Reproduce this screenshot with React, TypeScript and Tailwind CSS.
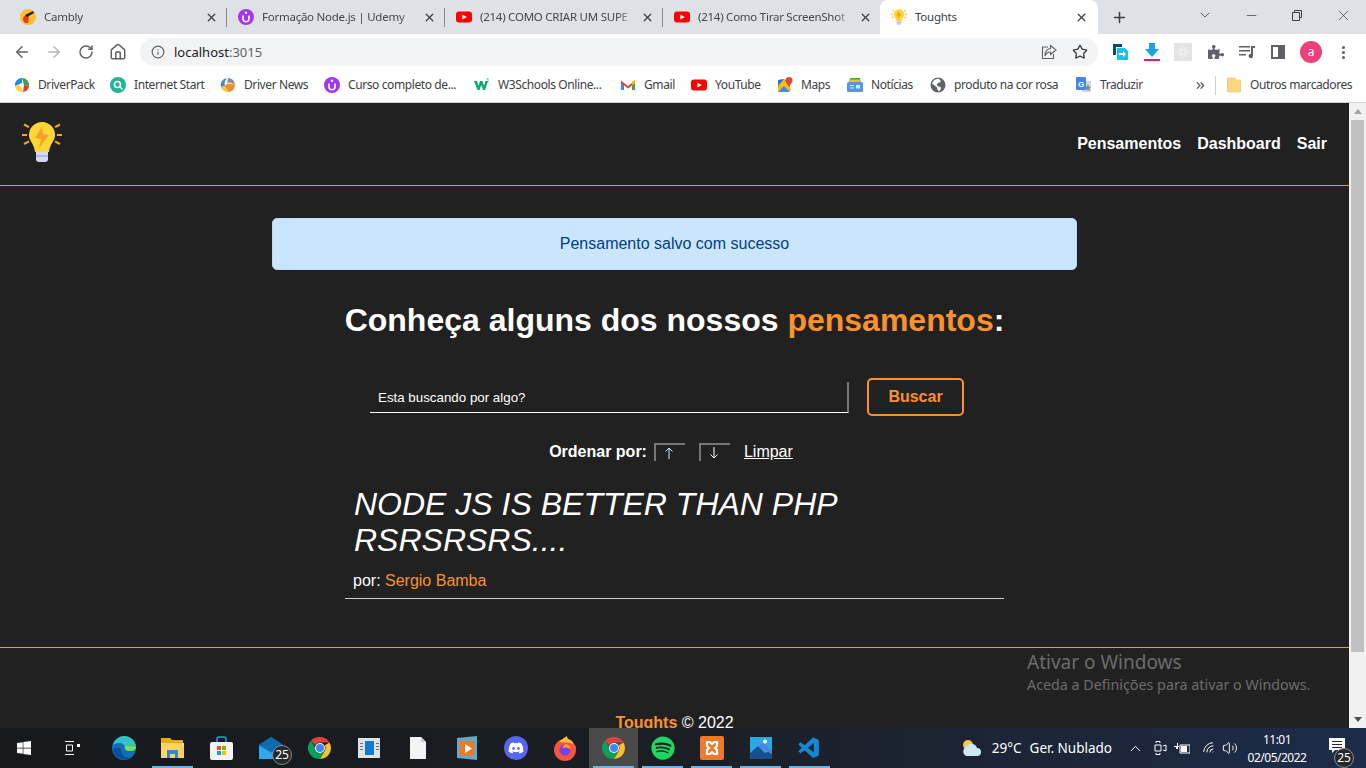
import React from 'react';
import { ArrowLeft, ArrowRight, RotateCw, Home, Info, Star, Plus, X, ChevronDown, Minus, MoreVertical, ChevronUp, Volume2, Wifi, ChevronsRight } from 'lucide-react';
import { FaPuzzlePiece, FaDiscord, FaSpotify, FaWindows } from 'react-icons/fa';
import { VscVscode } from 'react-icons/vsc';

const Bulb = ({ size }: { size: number }) => (
    <svg width={size} height={size} viewBox="0 0 40 40">
        <g stroke="#f9a02c" strokeWidth="2.2" strokeLinecap="square">
            <path d="M1 13h3M36 13h3M3 3l3 1.6M37 3l-3 1.6M3 21.5l3-1.6M37 21.5l-3-1.6" />
        </g>
        <path d="M20 0a13 13 0 0 1 13 13c0 6-5 8-6 17H13c-1-9-6-11-6-17A13 13 0 0 1 20 0z" fill="#fdd835" />
        <path d="M14 30h12v7a3 3 0 0 1-3 3h-6a3 3 0 0 1-3-3z" fill="#d5d8f5" />
        <path d="M14 33h12v2H14z" fill="#b3b8e8" />
        <path d="M20 4.500L13 16l6 1-2 9 10-13-6-1z" fill="#f9a02c" />
    </svg>
);

const Udemy = () => (
    <svg width="16" height="16" viewBox="0 0 16 16">
        <circle cx="8" cy="8" r="8" fill="#a435f0" />
        <path d="M5 6.500v3.200a3 3 0 0 0 6 0V6.500" fill="none" stroke="#fff" strokeWidth="1.600" />
        <circle cx="8" cy="3.800" r="1.200" fill="#fff" />
    </svg>
);

const YouTube = () => (
    <svg width="16" height="16" viewBox="0 0 16 16">
        <rect y="2.500" width="16" height="11" rx="3" fill="#f00" />
        <path d="M6.400 5.400v5.200L10.800 8z" fill="#fff" />
    </svg>
);

const Cambly = () => (
    <svg width="16" height="16" viewBox="0 0 16 16">
        <circle cx="8" cy="8" r="8" fill="#fbc02d" />
        <path d="M3 10c0-3 3-4 6-4l-1 8H6c-2 0-3-2-3-4z" fill="#e53935" />
        <path d="M5 6l8-4 1 2-7 4z" fill="#222" />
    </svg>
);

const DriverPack = () => (
    <svg width="16" height="16" viewBox="0 0 16 16">
        <path d="M1 9a7 7 0 0 1 7-8v5z" fill="#1e88e5" />
        <path d="M8 1a7 7 0 0 1 7 8l-5-1z" fill="#43a047" />
        <path d="M15 9a7 7 0 0 1-6 6l1-7z" fill="#e53935" />
        <path d="M1 9l5-1 3 7a7 7 0 0 1-8-6z" fill="#fdd835" />
    </svg>
);

const InternetStart = () => (
    <svg width="16" height="16" viewBox="0 0 16 16">
        <circle cx="8" cy="8" r="8" fill="#1fb595" />
        <circle cx="7.500" cy="7.500" r="3" fill="none" stroke="#fff" strokeWidth="1.600" />
        <path d="M10 10l2.500 2.500" stroke="#fff" strokeWidth="1.600" />
    </svg>
);

const DriverNews = () => (
    <svg width="16" height="16" viewBox="0 0 16 16">
        <path d="M8 1a7 7 0 0 1 7 7c-3-3-6-3-8-2z" fill="#8d8d8d" />
        <path d="M1 10a7 7 0 0 1 6-9c-2 3-3 5-2 8z" fill="#4a88c7" />
        <path d="M5 9c2-3 6-3 10-1a7 7 0 0 1-6 7c-2 0-3-3-4-6z" fill="#ef8e2e" />
        <path d="M1 10l4-1 4 6a7 7 0 0 1-8-5z" fill="#f6c244" />
    </svg>
);

const W3 = () => (
    <svg width="16" height="16" viewBox="0 0 16 16">
        <path d="M0 4h3l1.500 5L6 4h2.500l1.500 5 1.500-5H14l-3 9H9L7.300 8 5.500 13h-2z" fill="#04aa6d" />
        <text x="12" y="5" fontSize="5" fill="#04aa6d" fontFamily="Liberation Sans">3</text>
    </svg>
);

const Gmail = () => (
    <svg width="16" height="16" viewBox="0 0 16 16">
        <path d="M1 4v9h3V7z" fill="#4285f4" />
        <path d="M15 4v9h-3V7z" fill="#34a853" />
        <path d="M1 3.500L8 9l7-5.500V6L8 11.500 1 6z" fill="#ea4335" />
        <path d="M12 4.500l3-1.500v3l-3 2.500z" fill="#fbbc04" />
    </svg>
);

const Maps = () => (
    <svg width="16" height="16" viewBox="0 0 16 16">
        <path d="M1 3l6-1 7 10-1 2-12 1z" fill="#fbbc04" />
        <path d="M1 3l6-1-6 7z" fill="#1a73e8" />
        <path d="M1 15l6-6 6 6z" fill="#4285f4" />
        <path d="M7 2l6 9V6z" fill="#34a853" />
        <path d="M12 0a3.500 3.500 0 0 1 3.500 3.500C15.500 6 12 9 12 9S8.500 6 8.500 3.500A3.500 3.500 0 0 1 12 0z" fill="#ea4335" />
    </svg>
);

const News = () => (
    <svg width="16" height="16" viewBox="0 0 16 16">
        <path d="M3 1h10v4H3z" fill="#34a853" />
        <path d="M2 2.500h12v3H2z" fill="#fbbc04" />
        <rect y="5" width="16" height="10" rx="1.500" fill="#5b92ea" />
        <path d="M3 8h4v1H3zM3 10.500h4v1H3zM9 8h4v3.500H9z" fill="#dbe7fb" />
    </svg>
);

const Translate = () => (
    <svg width="16" height="16" viewBox="0 0 16 16">
        <path d="M6 4h9v11H6z" fill="#d5d8dc" />
        <rect width="10" height="13" rx="1" fill="#4285f4" />
        <text x="2" y="9.500" fontSize="8" fontWeight="700" fill="#fff" fontFamily="Liberation Sans">G</text>
        <path d="M12 7l1 2.500 2 .500-1.500 1.500.5 2.500-2-1.200-2 1.200.5-2.500L9 10l2-.500z" fill="#78909c" />
    </svg>
);

const DarkGlobe = () => (
    <svg width="16" height="16" viewBox="0 0 16 16">
        <circle cx="8" cy="8" r="7.500" fill="#5f6368" />
        <path d="M8 1.500c2 1 3 2 2.500 3.500L8 6 6.500 8l2 1.500 2 .500 .5 2-2 2.500c-1-1-2-3-2-4L4 8 2 6.500 4 3z" fill="#fff" />
    </svg>
);

const bookmarks = [
    { label: 'DriverPack', icon: <DriverPack />, cls: 'w-[96px]' },
    { label: 'Internet Start', icon: <InternetStart />, cls: 'w-[110px]' },
    { label: 'Driver News', icon: <DriverNews />, cls: 'w-[104px]' },
    { label: 'Curso completo de...', icon: <Udemy />, cls: 'w-[150px]' },
    { label: 'W3Schools Online...', icon: <W3 />, cls: 'w-[146px]' },
    { label: 'Gmail', icon: <Gmail />, cls: 'w-[71px]' },
    { label: 'YouTube', icon: <YouTube />, cls: 'w-[86px]' },
    { label: 'Maps', icon: <Maps />, cls: 'w-[70px]' },
    { label: 'Notícias', icon: <News />, cls: 'w-[83px]' },
    { label: 'produto na cor rosa', icon: <DarkGlobe />, cls: 'w-[146px]' },
    { label: 'Traduzir', icon: <Translate />, cls: 'w-[110px]' },
];

const tabs = [
    { label: 'Cambly', icon: <Cambly /> },
    { label: 'Formação Node.js | Udemy', icon: <Udemy /> },
    { label: '(214) COMO CRIAR UM SUPE', icon: <YouTube /> },
    { label: '(214) Como Tirar ScreenShot', icon: <YouTube /> },
];

const TabStrip = () => (
    <div className="flex h-[34px] shrink-0 items-stretch bg-[#dee1e6] pl-2 text-[11.5px] tracking-[-0.25px] text-[#45474a]">
        {tabs.map((tab) => (
            <div key={tab.label} className="relative flex w-[218px] items-center pl-3">
                <span className="mr-2 shrink-0">{tab.icon}</span>
                <span className="w-[156px] overflow-hidden whitespace-nowrap [mask-image:linear-gradient(to_right,black_88%,transparent)]">{tab.label}</span>
                <X size={13} strokeWidth={2.4} className="absolute right-[8px] top-[11px] text-[#3c4043]" />
                <span className="absolute right-[-1px] top-[8px] h-[19px] w-px bg-[#8a8d91]" />
            </div>
        ))}
        <div className="relative flex w-[218px] items-center rounded-t-lg bg-white pl-[11px] text-[#3c4043]">
            <span className="mr-2 shrink-0"><Bulb size={16} /></span>
            <span>Toughts</span>
            <X size={13} strokeWidth={2.4} className="absolute right-[10px] top-[11px] text-[#3c4043]" />
        </div>
        <div className="flex w-[43px] items-center justify-center">
            <Plus size={17} strokeWidth={2.2} className="text-[#3c4043]" />
        </div>
        <div className="ml-auto flex items-center pb-[4px] text-[#3c4043]">
            <span className="flex w-[46px] justify-center"><ChevronDown size={16} strokeWidth={1.2} /></span>
            <span className="flex w-[46px] justify-center"><Minus size={15} strokeWidth={1.2} /></span>
            <span className="flex w-[46px] justify-center">
                <svg width="12" height="12" viewBox="0 0 12 12" fill="none" stroke="currentColor">
                    <path d="M1.500 3.500h7v8h-7zM3.500 3.500v-2h7v7h-2" />
                </svg>
            </span>
            <span className="flex w-[46px] justify-center"><X size={17} strokeWidth={1} /></span>
        </div>
    </div>
);

const Toolbar = () => (
    <div className="flex h-[36px] shrink-0 items-center bg-white text-[#5f6368]">
        <div className="flex w-[140px] items-center pl-[13px]">
            <ArrowLeft size={18} strokeWidth={2} />
            <ArrowRight size={18} strokeWidth={2} className="ml-[14px] text-[#b4b6b9]" />
            <RotateCw size={16} strokeWidth={2.2} className="ml-[15px]" />
            <Home size={18} strokeWidth={2} className="ml-[15px]" />
        </div>
        <div className="flex h-[28px] w-[958px] items-center rounded-full bg-[#f1f3f4] pl-[11px] pr-[10px] text-[13px]">
            <Info size={14} strokeWidth={2} />
            <span className="ml-[9px] pt-px text-[#202124]">localhost<span className="text-[#5f6368]">:3015</span></span>
            <svg width="16" height="16" viewBox="0 0 16 16" fill="none" stroke="#5f6368" strokeWidth="1.100" className="ml-auto">
                <path d="M7 3H1.500v11.500h11V10" />
                <path d="M9.500 1.500L15 6l-5.500 4.500V8C6.500 8 5 9.500 4 12c0-4 2-7 5.500-7.500z" />
            </svg>
            <Star size={16} strokeWidth={2} className="ml-[15px] text-[#3c4043]" />
        </div>
        <div className="flex flex-1 items-center pl-[14px]">
            <svg width="17" height="18" viewBox="0 0 17 18">
                <path d="M1 1h9v3H4v8H1z" fill="#0d4a6b" />
                <path d="M5 5h8l3 3v9H5z" fill="#19c3e6" />
                <path d="M7 10h4V8l3 3-3 3v-2H7z" fill="#fff" />
            </svg>
            <span className="ml-[14px] flex w-[18px] flex-col items-center">
                <svg width="16" height="14" viewBox="0 0 16 14"><path d="M5 0h6v6h4l-7 8-7-8h4z" fill="#1ba1e2" /></svg>
                <span className="mt-[2px] h-[2px] w-[16px] bg-[#e91e63]" />
            </span>
            <span className="ml-[13px] flex h-[18px] w-[18px] items-center justify-center bg-[#e3e3e3]">
                <svg width="14" height="14" viewBox="0 0 14 14" fill="none" stroke="#f4f4f4"><circle cx="7" cy="7" r="2" /><ellipse cx="7" cy="7" rx="6" ry="3" /><ellipse cx="7" cy="7" rx="3" ry="6" /></svg>
            </span>
            <FaPuzzlePiece size={16} className="ml-[16px]" />
            <svg width="16" height="14" viewBox="0 0 16 14" className="ml-[15px]" fill="#5f6368">
                <path d="M0 1h11v1.500H0zM0 5h11v1.500H0zM0 9h7v1.500H0z" />
                <path d="M12 1h4v2h-2v8a2.200 2.200 0 1 1-2-2.200z" />
            </svg>
            <span className="ml-[16px] flex h-[14px] w-[14px] justify-end border-2 border-[#5f6368]"><span className="h-full w-[5px] bg-[#5f6368]" /></span>
            <span className="ml-[15px] flex h-[22px] w-[22px] items-center justify-center rounded-full bg-[#ec407a] text-[12px] text-white">a</span>
            <MoreVertical size={17} strokeWidth={2.4} className="ml-[13px]" />
        </div>
    </div>
);

const BookmarksBar = () => (
    <div className="flex h-[33px] shrink-0 items-center border-b border-[#d0d2d5] bg-white pb-[2px] pl-[14px] text-[12px] tracking-[-0.4px] text-[#3c4043]">
        {bookmarks.map((b) => (
            <div key={b.label} className={`flex shrink-0 items-center gap-2 whitespace-nowrap ${b.cls}`}>
                <span className="shrink-0">{b.icon}</span>
                <span>{b.label}</span>
            </div>
        ))}
        <ChevronsRight size={13} strokeWidth={2.4} className="ml-[8px] text-[#5f6368]" />
        <span className="ml-[8px] h-[19px] w-px bg-[#cfd1d4]" />
        <svg width="14" height="16" viewBox="0 0 14 16" className="ml-[11px]"><path d="M0 1h8l1 2h5v12H0z" fill="#f9d77e" stroke="#e6bf5c" strokeWidth="0.500" /></svg>
        <span className="ml-[9px] whitespace-nowrap">Outros marcadores</span>
    </div>
);

const PageHeader = () => (
    <header className="flex h-[83px] items-center justify-between border-b border-[#e39a42] pl-[22px] pr-[22px]">
        <span className="-mt-[4px]"><Bulb size={40} /></span>
        <nav className="flex gap-4 text-[16px] font-bold text-white">
            <a>Pensamentos</a>
            <a>Dashboard</a>
            <a>Sair</a>
        </nav>
    </header>
);

const SortButton = ({ up }: { up?: boolean }) => (
    <button className="flex h-[18px] w-[31px] items-center justify-center border-l-2 border-t-2 border-[#767676] pr-[2px] text-white">
        <svg width="10" height="12" viewBox="0 0 10 12" fill="none" stroke={up ? '#cfefff' : '#fff'} strokeWidth="1">
            {up ? <path d="M5 12V1M1.500 4.500L5 1l3.500 3.500" /> : <path d="M5 0v11M1.500 7.500L5 11l3.500-3.500" />}
        </svg>
    </button>
);

const PageBody = () => (
    <main className="mx-auto flex w-[805px] flex-col items-center pt-[32px]">
        <div className="flex h-[52px] w-full items-center justify-center rounded-[5px] border border-[#b8daff] bg-[#cce5ff] text-[16px] text-[#004085]">
            Pensamento salvo com sucesso
        </div>
        <h1 className="mt-[32px] text-[32px] font-bold leading-[37px] text-white">
            Conheça alguns dos nossos <span className="text-[#f9922b]">pensamentos</span>:
        </h1>
        <form className="mr-[15px] mt-[39px] flex h-[38px] w-[594px] items-center justify-between">
            <div className="flex h-[31px] w-[479px] items-center border-b border-r-2 border-b-white border-r-[#767676] pl-2 pt-[2px] text-[13.33px] text-white">
                Esta buscando por algo?
            </div>
            <button type="button" className="flex h-[38px] w-[97px] items-center justify-center rounded-[5px] border-2 border-[#f9922b] text-[16px] font-bold text-[#f9922b]">
                Buscar
            </button>
        </form>
        <div className="mr-[7px] mt-[27px] flex h-[18px] items-center text-[16px] text-white">
            <span className="mr-[7px] font-bold">Ordenar por:</span>
            <SortButton up />
            <span className="ml-[14px]"><SortButton /></span>
            <a className="ml-[14px] underline">Limpar</a>
        </div>
        <section className="mt-[25px] w-[659px] border-b border-[#cfcfcf] pb-[8px]">
            <h2 className="pl-[9px] text-[32px] italic leading-[36px] text-white">NODE JS IS BETTER THAN PHP RSRSRSRS....</h2>
            <p className="mt-[14px] pl-2 text-[16px] leading-[18px] text-white">
                por: <span className="text-[#f9922b]">Sergio Bamba</span>
            </p>
        </section>
    </main>
);

const Scrollbar = () => (
    <div className="flex w-[17px] shrink-0 flex-col items-center bg-[#f1f1f1]">
        <span className="mt-[6px] h-0 w-0 border-x-[4px] border-b-[5px] border-x-transparent border-b-[#a3a3a3]" />
        <span className="mt-[6px] h-[532px] w-[13px] bg-[#c1c1c1]" />
        <span className="mt-auto mb-[6px] h-0 w-0 border-x-[4px] border-t-[5px] border-x-transparent border-t-[#505050]" />
    </div>
);

const Badge = () => (
    <span className="absolute left-[26px] top-[17px] flex h-[20px] w-[20px] items-center justify-center rounded-full border border-[#8a8a8a] bg-[#26282c] text-[12px] text-white">25</span>
);

const ChromeIcon = () => (
    <svg width="24" height="24" viewBox="0 0 24 24">
        <path d="M12 1a11 11 0 0 1 9.500 5.500H12a5.500 5.500 0 0 0-5 3L3 4.500A11 11 0 0 1 12 1z" fill="#db4437" />
        <path d="M21.500 6.500A11 11 0 0 1 12 23l4.600-8A5.500 5.500 0 0 0 16.800 9.300z" fill="#fbc02d" />
        <path d="M3 4.500l4.600 8A5.500 5.500 0 0 0 16.600 15L12 23A11 11 0 0 1 3 4.500z" fill="#0f9d58" />
        <circle cx="12" cy="12" r="5" fill="#fff" />
        <circle cx="12" cy="12" r="4" fill="#4285f4" />
    </svg>
);

type Pin = { key: string; node: React.ReactNode; bar?: boolean; active?: boolean; badge?: boolean };

const pins: Pin[] = [
    {
        key: 'edge',
        node: (
            <svg width="24" height="24" viewBox="0 0 24 24">
                <circle cx="12" cy="12" r="12" fill="#0c6fb8" />
                <path d="M1 9C3 3 8 0 12 0c7 0 12 5 12 11 0 3-3 4-6 4-3 0-5-1-5-3 0-4-5-7-12-3z" fill="#35c1c1" />
                <path d="M24 11c0 3-3 4-6 4-4 0-6-2-5-5 2 0 7 0 11 1z" fill="#7ed957" />
                <path d="M9 14c0 5 4 8 9 8a12 12 0 0 1-17-8c2-3 8-3 8 0z" fill="#0a4d9c" />
            </svg>
        ),
    },
    {
        key: 'explorer',
        bar: true,
        node: (
            <svg width="23" height="22" viewBox="0 0 23 22">
                <path d="M0 1h9l2 2h11v17H0z" fill="#e8a91d" />
                <path d="M0 6h23v15H0z" fill="#fcd462" />
                <path d="M6 13h11v8h-3v-4H9v4H6z" fill="#2a8ad4" />
            </svg>
        ),
    },
    {
        key: 'store',
        node: (
            <svg width="23" height="24" viewBox="0 0 23 24">
                <path d="M7 6V3a2 2 0 0 1 2-2h5a2 2 0 0 1 2 2v3" fill="none" stroke="#21a4e8" strokeWidth="1.500" />
                <rect y="6" width="23" height="18" rx="2" fill="#f3f3f3" />
                <path d="M7 10h4v4H7z" fill="#f25022" /><path d="M12 10h4v4h-4z" fill="#7fba00" />
                <path d="M7 15h4v4H7z" fill="#00a4ef" /><path d="M12 15h4v4h-4z" fill="#ffb900" />
            </svg>
        ),
    },
    {
        key: 'mail',
        badge: true,
        node: (
            <svg width="24" height="22" viewBox="0 0 24 22">
                <path d="M0 8l12-8 12 8v14H0z" fill="#1c8fe0" />
                <path d="M0 8l12 7 12-7-12-8z" fill="#0b6ab0" />
                <path d="M0 9l12 7 12-7v13H0z" fill="#35a7f0" />
            </svg>
        ),
    },
    { key: 'chrome-old', node: <ChromeIcon /> },
    {
        key: 'reader',
        node: (
            <svg width="22" height="20" viewBox="0 0 22 20">
                <rect width="22" height="20" fill="#dfe3e6" />
                <path d="M7 3h9v14H7z" fill="#0f7bd4" />
                <path d="M2 5h3v1H2zM2 8h3v1H2zM2 11h3v1H2zM18 5h3v1h-3zM18 8h3v1h-3zM18 11h3v1h-3z" fill="#6d7378" />
            </svg>
        ),
    },
    {
        key: 'file',
        node: (
            <svg width="16" height="22" viewBox="0 0 16 22">
                <path d="M0 0h11l5 5v17H0z" fill="#f2f3f5" />
                <path d="M11 0l5 5h-5z" fill="#c8ccd0" />
            </svg>
        ),
    },
    {
        key: 'player',
        node: (
            <svg width="20" height="24" viewBox="0 0 20 24">
                <path d="M0 2l20-2v24L0 22z" fill="#6fa3c9" />
                <path d="M3 5h14v15H3z" fill="#ee7a1e" />
                <path d="M8 8v9l7-4.500z" fill="#fff" />
            </svg>
        ),
    },
    {
        key: 'discord',
        node: (
            <span className="flex h-6 w-6 items-center justify-center rounded-full bg-[#5865f2] text-white"><FaDiscord size={16} /></span>
        ),
    },
    {
        key: 'firefox',
        node: (
            <svg width="24" height="25" viewBox="0 0 24 25">
                <circle cx="12" cy="14" r="11" fill="#f6533a" />
                <path d="M6 6c3-3 5-4 8-6 0 3 2 3 5 5l4 8c0-3-2-5-6-6z" fill="#ffb93c" />
                <circle cx="12" cy="14" r="5.500" fill="#7542e5" />
                <path d="M12 8a6 6 0 0 1 6 6c-2-3-6-3-9-2z" fill="#ff9a2e" />
            </svg>
        ),
    },
    { key: 'chrome', node: <ChromeIcon />, active: true, bar: true },
    { key: 'spotify', bar: true, node: <FaSpotify size={24} color="#1ed760" /> },
    {
        key: 'xampp',
        bar: true,
        node: (
            <span className="flex h-6 w-6 items-center justify-center rounded-[2px] bg-[#ef7a2c]">
                <svg width="16" height="16" viewBox="0 0 16 16" fill="none" stroke="#fff" strokeWidth="2.200">
                    <path d="M3 2h3l2 2 2-2h3v4l-2 2 2 2v4h-3l-2-2-2 2H3v-4l2-2-2-2z" />
                </svg>
            </span>
        ),
    },
    {
        key: 'photos',
        bar: true,
        node: (
            <svg width="22" height="22" viewBox="0 0 22 22">
                <rect width="22" height="22" fill="#29a8e8" />
                <path d="M0 16l8-7 7 7 7-3v9H0z" fill="#1a4f8f" />
                <path d="M8 9l5-3 9 8v3z" fill="#5a7fd8" />
                <circle cx="15" cy="4.500" r="2" fill="#fff" />
            </svg>
        ),
    },
    { key: 'vscode', bar: true, node: <VscVscode size={25} color="#0f8bd6" /> },
];

const Taskbar = () => (
    <div className="flex h-[40px] shrink-0 items-stretch bg-gradient-to-r from-[#17191d] via-[#1b1e24] to-[#1d2c4a] text-white">
        <div className="flex w-12 items-center justify-center"><FaWindows size={16} /></div>
        <div className="mr-[3px] flex w-12 items-center justify-center">
            <svg width="16" height="14" viewBox="0 0 16 14" fill="none" stroke="#fff">
                <path d="M1 .500h9M1 13.500h9M2.500 4h6v6h-6z" />
                <path d="M13 3h3v3h-3z" fill="#fff" stroke="none" />
            </svg>
        </div>
        {pins.map((p) => (
            <div key={p.key} className={`relative flex w-[49px] items-center justify-center ${p.active ? 'bg-[#4a4a4a]' : ''}`}>
                {p.node}
                {p.badge && <Badge />}
                {p.bar && <span className="absolute bottom-0 left-1 right-1 h-[2px] bg-[#6cb4e8]" />}
            </div>
        ))}
        <div className="ml-auto flex items-center text-[13.5px]">
            <svg width="22" height="18" viewBox="0 0 22 18">
                <circle cx="8" cy="6" r="5" fill="#f8c44a" />
                <path d="M6 17a5 5 0 0 1 0-9 6 6 0 0 1 11 1 4 4 0 0 1 0 8z" fill="#cfe8f8" />
            </svg>
            <span className="ml-[10px] whitespace-nowrap">29°C</span>
            <span className="ml-2 whitespace-nowrap">Ger. Nublado</span>
            <ChevronUp size={17} strokeWidth={1.4} className="ml-[15px]" />
            <svg width="14" height="16" viewBox="0 0 14 16" fill="none" stroke="#fff" className="ml-[9px]">
                <path d="M3 3V1.500h4V3M3 13v1.500h4V13M2 5v6h6V5zM10 6l3-1v6l-3-1" />
            </svg>
            <svg width="16" height="12" viewBox="0 0 16 12" fill="#fff" className="ml-[7px]">
                <path d="M0 4h3V1h1v3h1v1H4v2H2V5H0z" />
                <path d="M6 3h10v8H6z" fill="none" stroke="#fff" /><path d="M7 4h6v6H7z" />
            </svg>
            <Wifi size={15} strokeWidth={1.5} className="ml-[12px] -rotate-45" />
            <Volume2 size={16} strokeWidth={1.4} className="ml-[5px]" />
            <div className="ml-[3px] flex w-[72px] flex-col items-center pt-[2px] text-[12px] leading-[18px] tracking-[-0.5px]">
                <span>11:01</span>
                <span>02/05/2022</span>
            </div>
            <div className="relative ml-[9px] flex w-[44px] items-center pl-[7px]">
                <svg width="16" height="16" viewBox="0 0 16 16" className="-mt-1"><path d="M0 0h16v12H6l-3 3v-3H0z" fill="#fff" /><path d="M3 3h10v1H3zM3 6h10v1H3zM3 9h10v1H3z" fill="#26282c" /></svg>
                <span className="absolute left-[12px] top-[6px] flex h-[20px] w-[20px] items-center justify-center rounded-full border border-[#8a8a8a] bg-[#26282c] text-[12px]">25</span>
            </div>
        </div>
    </div>
);

const App: React.FC = () => {
    return (
        <div className="flex h-screen w-full flex-col overflow-hidden font-['Noto_Sans',sans-serif]">
            <TabStrip />
            <Toolbar />
            <BookmarksBar />
            <div className="flex min-h-0 flex-1">
                <div className="relative min-w-0 flex-1 overflow-hidden bg-[#212121] font-['Liberation_Sans',Arial,sans-serif]">
                    <PageHeader />
                    <PageBody />
                    <footer className="mt-[48px] border-t border-[#e39a42] pt-[66px] text-center text-[16px] leading-[18px] text-white">
                        <span className="font-bold text-[#f9922b]">Toughts</span> © 2022
                    </footer>
                    <div className="absolute left-[1027px] top-[546px] font-['Noto_Sans',sans-serif] text-[#6c6c6c]">
                        <p className="text-[19px] leading-[26px]">Ativar o Windows</p>
                        <p className="mt-[1px] whitespace-nowrap text-[14.3px] leading-[18px]">Aceda a Definições para ativar o Windows.</p>
                    </div>
                </div>
                <Scrollbar />
            </div>
            <Taskbar />
        </div>
    );
};

export default App;
